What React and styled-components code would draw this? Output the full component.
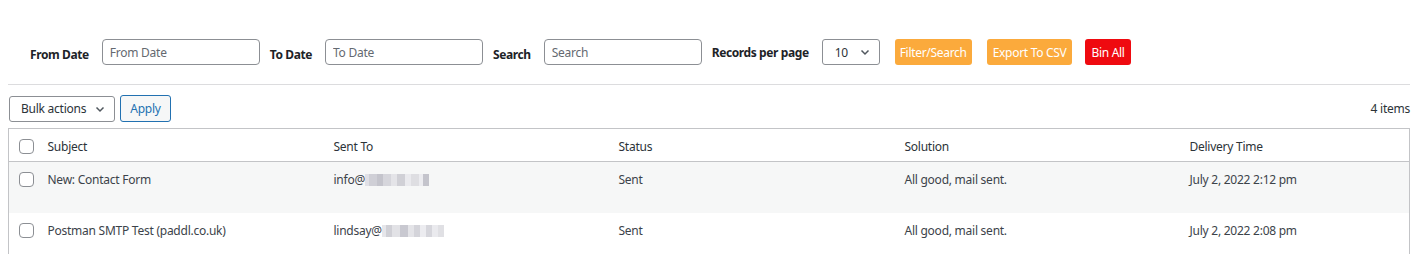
import React from 'react';
import styled, { createGlobalStyle } from 'styled-components';

const GlobalStyle = createGlobalStyle`
  body {
    margin: 0;
    background: #fff;
    font-family: "Noto Sans", "Liberation Sans", sans-serif;
    font-size: 12px;
    letter-spacing: -0.25px;
    color: #3c434a;
  }
`;

const Page = styled.div`
  padding: 39px 4px 0 8px;
`;

const FilterRow = styled.div`
  display: flex;
  align-items: center;
  padding-left: 22px;
  height: 26px;
`;

const Field = styled.div`
  display: flex;
  align-items: center;
  gap: 13px;
  margin-right: 10px;
`;

const Label = styled.label`
  font-weight: 700;
  color: #1d2327;
  font-size: 12px;
  letter-spacing: -0.4px;
  padding-top: ${p => (p.$low ? '5px' : '1px')};
`;

const Input = styled.input`
  box-sizing: border-box;
  width: 158px;
  height: 26px;
  border: 1px solid #8c8f94;
  border-radius: 4px;
  padding: 1px 7px 0;
  font: inherit;
  font-size: 12px;
  letter-spacing: -0.25px;
  color: #2c3338;
  &::placeholder {
    color: #646970;
  }
`;

const SelectBox = styled.div`
  box-sizing: border-box;
  display: flex;
  align-items: center;
  justify-content: space-between;
  width: ${p => p.$w}px;
  height: 26px;
  border: 1px solid #8c8f94;
  border-radius: 3px;
  padding: 0 8px 0 ${p => p.$pl}px;
  color: #2c3338;
  background: #fff;
  white-space: nowrap;
`;

const Btn = styled.button`
  box-sizing: border-box;
  height: 26px;
  border: none;
  border-radius: 3px;
  padding: 1px ${p => p.$px}px 0;
  margin-left: ${p => p.$ml}px;
  background: ${p => p.$bg};
  color: #fff;
  font: inherit;
  font-size: 12px;
  letter-spacing: -0.3px;
`;

const Divider = styled.div`
  height: 1px;
  background: #dcdcde;
  margin-top: 19px;
`;

const TableNav = styled.div`
  display: flex;
  align-items: center;
  gap: 5px;
  margin-top: 10px;
  padding-left: 1px;
`;

const ApplyBtn = styled.button`
  box-sizing: border-box;
  height: 27px;
  width: 51px;
  border: 1px solid #2271b1;
  border-radius: 3px;
  background: #f6f7f7;
  color: #2271b1;
  font: inherit;
  letter-spacing: -0.25px;
  padding: 0;
`;

const Count = styled.span`
  margin-left: auto;
  color: #2c3338;
`;

const Table = styled.table`
  width: 100%;
  margin-top: 6px;
  border: 1px solid #c3c4c7;
  border-collapse: collapse;
  table-layout: fixed;
`;

const HeadCell = styled.th`
  text-align: left;
  font-weight: 400;
  color: #2c3338;
  padding: 9px 10px 5px;
  line-height: 18px;
  height: 18px;
  border-bottom: 1px solid #c3c4c7;
  white-space: nowrap;
`;

const Row = styled.tr`
  background: ${p => (p.$alt ? '#f6f7f7' : '#fff')};
`;

const Cell = styled.td`
  vertical-align: top;
  padding: 9px 10px 7px;
  line-height: 18px;
  height: ${p => p.$h}px;
  box-sizing: border-box;
  color: #3c434a;
  white-space: nowrap;
`;

const CheckCell = styled.td`
  vertical-align: top;
  padding: ${p => p.$top}px 0 0 10px;
`;

const CheckHead = styled.th`
  padding: 10px 0 0 10px;
  vertical-align: top;
  border-bottom: 1px solid #c3c4c7;
`;

const Checkbox = styled.span`
  display: block;
  box-sizing: border-box;
  width: 15px;
  height: 15px;
  border: 1px solid #8c8f94;
  border-radius: 4px;
  background: #fff;
`;

const Blur = styled.span`
  display: inline-flex;
  vertical-align: -2px;
  height: 12px;
`;

const Pix = styled.span`
  display: inline-block;
  width: ${p => p.$w}px;
  height: 12px;
  background: ${p => p.$c};
`;

const Chevron = () => (
  <svg width="12" height="12" viewBox="0 0 12 12" fill="none">
    <path d="M2.5 4.5 6 8l3.5-3.5" stroke="#50575e" strokeWidth="1.5" />
  </svg>
);

const BlurredDomain = ({ blocks }) => (
  <Blur>
    {blocks.map(([w, c], i) => (
      <Pix key={i} $w={w} $c={c} />
    ))}
  </Blur>
);

const domainA = [
  [4, '#e0e0e6'], [8, '#cfcfd6'], [6, '#c4c4cc'], [8, '#d6d6dc'], [6, '#e4e4e8'],
  [8, '#d0d0d6'], [6, '#eaeaee'], [8, '#dedee2'], [4, '#ececf0'], [6, '#c4c4cc'],
];

const domainB = [
  [4, '#e6e6ea'], [6, '#d0d0d6'], [8, '#e2e2e6'], [8, '#c8c8d0'], [6, '#e4e4e8'],
  [6, '#d4d4da'], [6, '#ececf0'], [6, '#d6d6dc'], [6, '#eaeaee'], [6, '#e0e0e4'],
];

const rows = [
  {
    subject: 'New: Contact Form',
    user: 'info@',
    blocks: domainA,
    status: 'Sent',
    solution: 'All good, mail sent.',
    time: 'July 2, 2022 2:12 pm',
  },
  {
    subject: 'Postman SMTP Test (paddl.co.uk)',
    user: 'lindsay@',
    blocks: domainB,
    status: 'Sent',
    solution: 'All good, mail sent.',
    time: 'July 2, 2022 2:08 pm',
  },
];

const App = () => (
  <Page>
    <GlobalStyle />
    <FilterRow>
      <Field>
        <Label $low>From Date</Label>
        <Input placeholder="From Date" />
      </Field>
      <Field>
        <Label $low>To Date</Label>
        <Input placeholder="To Date" />
      </Field>
      <Field>
        <Label $low>Search</Label>
        <Input placeholder="Search" />
      </Field>
      <Field>
        <Label>Records per page</Label>
        <SelectBox $w={58} $pl={12}>
          10 <Chevron />
        </SelectBox>
      </Field>
      <Btn $bg="#fbaa3c" $px={5} $ml={5}>Filter/Search</Btn>
      <Btn $bg="#fbaa3c" $px={6} $ml={15}>Export To CSV</Btn>
      <Btn $bg="#ef0a10" $px={6} $ml={13}>Bin All</Btn>
    </FilterRow>
    <Divider />
    <TableNav>
      <SelectBox $w={106} $pl={11}>
        Bulk actions <Chevron />
      </SelectBox>
      <ApplyBtn>Apply</ApplyBtn>
      <Count>4 items</Count>
    </TableNav>
    <Table>
      <colgroup>
        <col style={{ width: 29 }} />
        <col style={{ width: 286 }} />
        <col style={{ width: 285 }} />
        <col style={{ width: 286 }} />
        <col style={{ width: 285 }} />
        <col />
      </colgroup>
      <thead>
        <tr>
          <CheckHead>
            <Checkbox />
          </CheckHead>
          <HeadCell>Subject</HeadCell>
          <HeadCell>Sent To</HeadCell>
          <HeadCell>Status</HeadCell>
          <HeadCell>Solution</HeadCell>
          <HeadCell>Delivery Time</HeadCell>
        </tr>
      </thead>
      <tbody>
        {rows.map((r, i) => (
          <Row key={r.subject} $alt={i % 2 === 0}>
            <CheckCell $top={10}>
              <Checkbox />
            </CheckCell>
            <Cell $h={51}>{r.subject}</Cell>
            <Cell $h={51}>
              {r.user}
              <BlurredDomain blocks={r.blocks} />
            </Cell>
            <Cell $h={51}>{r.status}</Cell>
            <Cell $h={51}>{r.solution}</Cell>
            <Cell $h={51}>{r.time}</Cell>
          </Row>
        ))}
      </tbody>
    </Table>
  </Page>
);

export default App;
